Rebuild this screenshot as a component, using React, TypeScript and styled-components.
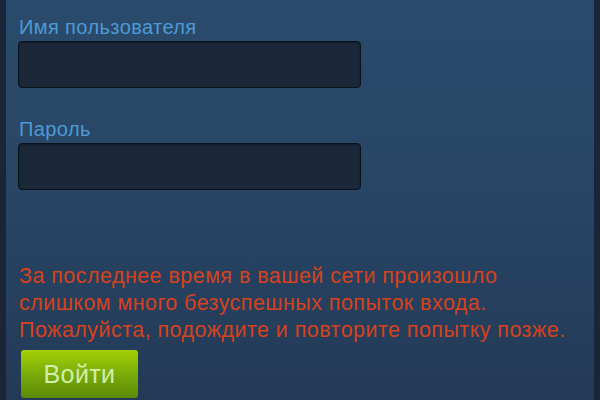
import styled, { createGlobalStyle } from "styled-components";

const GlobalStyle = createGlobalStyle`
  html, body {
    margin: 0;
    padding: 0;
    background: #16202d;
  }
  #root {
    height: 400px;
  }
`;

const Frame = styled.div`
  width: 600px;
  height: 400px;
  display: flex;
  background: #1a2637;
  overflow: hidden;
`;

const Panel = styled.div`
  flex: 1;
  margin: 0 6px;
  padding: 16px 12px 0 12px;
  background: linear-gradient(180deg, #2b4b6c 0%, #284565 50%, #233a56 100%);
  font-family: "Liberation Sans", Arial, sans-serif;
  display: flex;
  flex-direction: column;
`;

const Field = styled.div<{ $gap?: number }>`
  display: flex;
  flex-direction: column;
  margin-bottom: ${(p) => p.$gap ?? 0}px;
`;

const Label = styled.label`
  color: #4d9ad5;
  font-size: 20px;
  letter-spacing: 0.4px;
  line-height: 22px;
  padding-left: 1px;
  margin-bottom: 3px;
`;

const Input = styled.input`
  box-sizing: border-box;
  width: 343px;
  height: 47px;
  background: #1b2839;
  border: 1.5px solid #0b1119;
  border-radius: 4px;
  outline: none;
  color: #c7d5e0;
  font-size: 18px;
  padding: 0 10px;
  box-shadow: inset 0 1px 2px rgba(0, 0, 0, 0.3);
`;

const Error = styled.p`
  margin: 0 0 6px 0;
  color: #d5421c;
  font-size: 21.5px;
  letter-spacing: 0.45px;
  line-height: 27px;
  padding-left: 1px;
`;

const Button = styled.button`
  align-self: flex-start;
  margin-left: 3px;
  width: 117px;
  height: 48px;
  border: none;
  border-radius: 3px;
  background: linear-gradient(180deg, #a4d007 0%, #7aac08 50%, #5c8a0a 100%);
  color: #d2eeaa;
  font-family: "Liberation Sans", Arial, sans-serif;
  font-size: 25px;
  letter-spacing: 0.4px;
  cursor: pointer;
`;

export default function App() {
  return (
    <>
      <GlobalStyle />
      <Frame>
        <Panel>
          <Field $gap={30}>
            <Label>Имя пользователя</Label>
            <Input type="text" />
          </Field>
          <Field $gap={73}>
            <Label>Пароль</Label>
            <Input type="password" />
          </Field>
          <Error>
            За последнее время в вашей сети произошло
            <br />
            слишком много безуспешных попыток входа.
            <br />
            Пожалуйста, подождите и повторите попытку позже.
          </Error>
          <Button>Войти</Button>
        </Panel>
      </Frame>
    </>
  );
}
